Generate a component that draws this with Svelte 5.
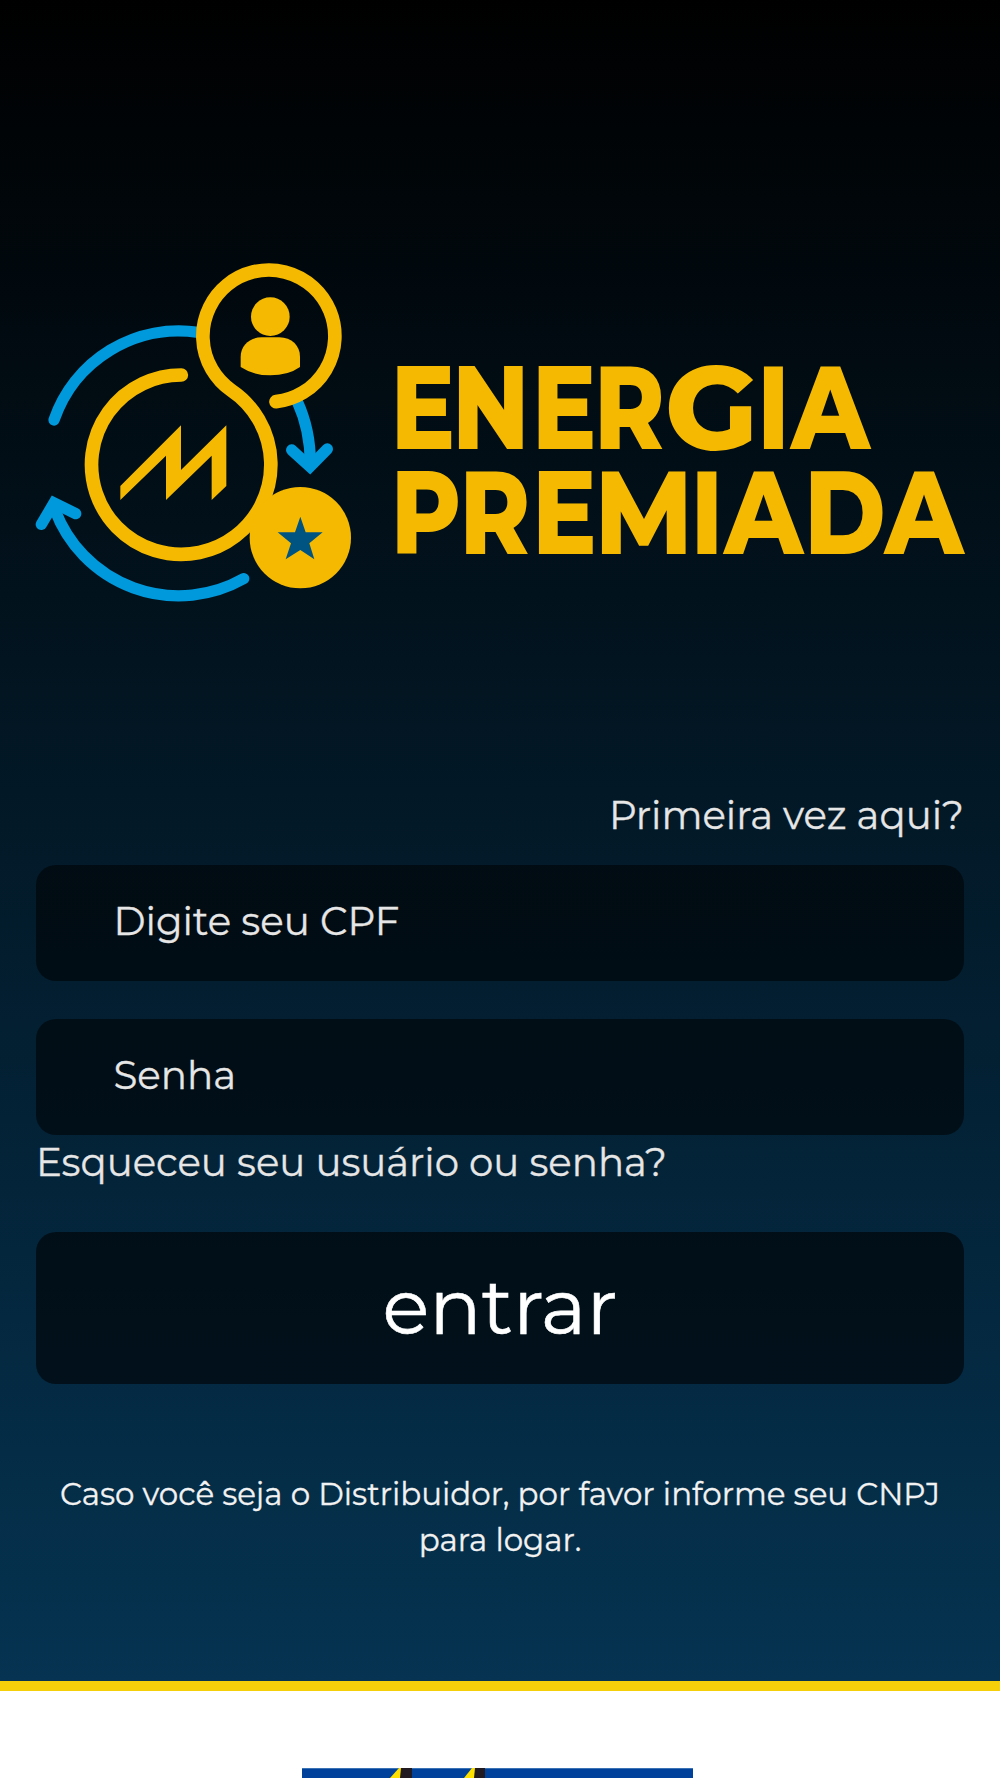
<script>
  let cpf = '';
  let senha = '';

  // posição e largura (opcional) de cada letra do logotipo
  const linhas = [
    {
      y: 187,
      letras: [
        ['E', 438], ['N', 514], ['E', 612.2], ['R', 688.8],
        ['G', 776.2, 115], ['I', 890.6], ['A', 932, 97.5],
      ],
    },
    {
      y: 292,
      letras: [
        ['P', 438], ['R', 523], ['E', 612.7], ['M', 689.8, 121],
        ['I', 808.4], ['A', 849.8, 97.5], ['D', 948.1, 101], ['A', 1047.9, 97.5],
      ],
    },
  ];
</script>

<main class="login">
  <svg class="logo" viewBox="0 0 928 340" role="img" aria-label="Energia Premiada">
    <g transform="translate(-16 -12) scale(0.33333)">
      <g class="ring blue">
        <path d="M102 510A396 396 0 0 1 535 247" />
        <path d="M832 455Q871 540 871 640" stroke-linecap="butt" />
        <path d="M815 600L870 650L922 597" />
        <path d="M105 780A396 396 0 0 0 671 986" />
        <path d="M64 823L102 759L167 791" />
      </g>
      <path class="ring" d="M484 375A269 269 0 1 0 634 421A198 198 0 1 1 768 455" />
      <circle cx="751" cy="200" r="58" />
      <path d="M662 320C662 285 692 262 725 262H778C815 262 840 287 840 320V351Q805 376 751 376Q700 376 662 351Z" />
      <path d="M301 708L483 526V660L619 526V708L575 750V617L438 750V617L301 750Z" />
      <circle cx="841" cy="863" r="152" />
      <path class="star" d="M841 800L857 847H908L868 880L883 928L841 900L797 928L813 880L773 847H825Z" />
    </g>
    <g transform="scale(0.81 1)">
      {#each linhas as linha}
        <text y={linha.y}>{#each linha.letras as [letra, x, largura]}<tspan {x} textLength={largura} lengthAdjust="spacingAndGlyphs">{letra}</tspan>{/each}</text>
      {/each}
    </g>
  </svg>

  <form class="form" on:submit|preventDefault>
    <a class="link first" href="#cadastro">Primeira vez aqui?</a>
    <input class="cpf" type="text" placeholder="Digite seu CPF" bind:value={cpf} />
    <input class="senha" type="password" placeholder="Senha" bind:value={senha} />
    <a class="link forgot" href="#recuperar">Esqueceu seu usuário ou senha?</a>
    <button type="submit">entrar</button>
  </form>

  <p class="note">Caso você seja o Distribuidor, por favor informe seu CNPJ para logar.</p>
</main>

<footer class="footer">
  <svg class="brand" viewBox="0 0 391 10" aria-hidden="true">
    <rect width="391" height="10" fill="#00429b" />
    <rect width="391" height="1" fill="#3972b5" />
    <path d="M88 10L97 0H101V10Z" fill="#ffe100" />
    <path d="M99 0H110V10H98Z" fill="#211a20" />
    <path d="M162 10L170 0H174V10Z" fill="#ffe100" />
    <path d="M173 0H183V10H172Z" fill="#211a20" />
  </svg>
</footer>

<style>
  :global(body) {
    margin: 0;
    overflow: hidden;
    background: #fff;
    font-family: Montserrat, Inter, sans-serif;
  }

  .login {
    box-sizing: border-box;
    height: 1681px;
    padding: 262px 36px 0;
    background: linear-gradient(#000, #053351);
  }

  .logo {
    display: block;
    width: 928px;
    height: 340px;
    overflow: visible;
    fill: #f5b901;
  }

  .logo text {
    font-size: 118px;
    font-weight: 800;
  }

  .ring {
    fill: none;
    stroke: #f5b901;
    stroke-width: 41;
    stroke-linecap: round;
  }

  .ring.blue {
    stroke: #0099dc;
    stroke-width: 34;
  }

  .star {
    fill: #005482;
  }

  .form {
    display: flex;
    flex-direction: column;
    margin-top: 189px;
  }

  .link {
    color: #e6e6e6;
    font-size: 38.7px;
    line-height: 50px;
    text-decoration: none;
    white-space: nowrap;
    -webkit-text-stroke: 0.3px;
  }

  .first {
    align-self: flex-end;
    margin-bottom: 24px;
  }

  input {
    box-sizing: border-box;
    width: 100%;
    height: 115.5px;
    padding: 0 77.5px 4px;
    border: 0;
    border-radius: 20px;
    outline: none;
    background: rgba(0, 0, 0, 0.55);
    color: #e6e6e6;
    font-family: inherit;
    font-size: 38.8px;
    -webkit-text-stroke: 0.3px;
  }

  input::placeholder {
    color: #e6e6e6;
    opacity: 1;
  }

  .senha {
    margin-top: 38.5px;
  }

  .forgot {
    align-self: flex-start;
    margin-top: 3px;
  }

  button {
    height: 152px;
    margin-top: 44.5px;
    padding: 0 0 5px;
    border: 0;
    border-radius: 20px;
    background: rgba(0, 0, 0, 0.6);
    color: #fff;
    font-family: inherit;
    font-size: 77.4px;
    -webkit-text-stroke: 0.6px;
  }

  .note {
    margin: 87px 0 0;
    color: #f2f2f2;
    font-size: 30.96px;
    line-height: 46px;
    text-align: center;
    -webkit-text-stroke: 0.3px;
  }

  .footer {
    height: 97px;
    box-sizing: border-box;
    padding: 77px 0 0 302px;
    border-top: 10px solid #f5cf0a;
    background: #fff;
  }

  .brand {
    display: block;
    width: 391px;
    height: 10px;
  }
</style>
